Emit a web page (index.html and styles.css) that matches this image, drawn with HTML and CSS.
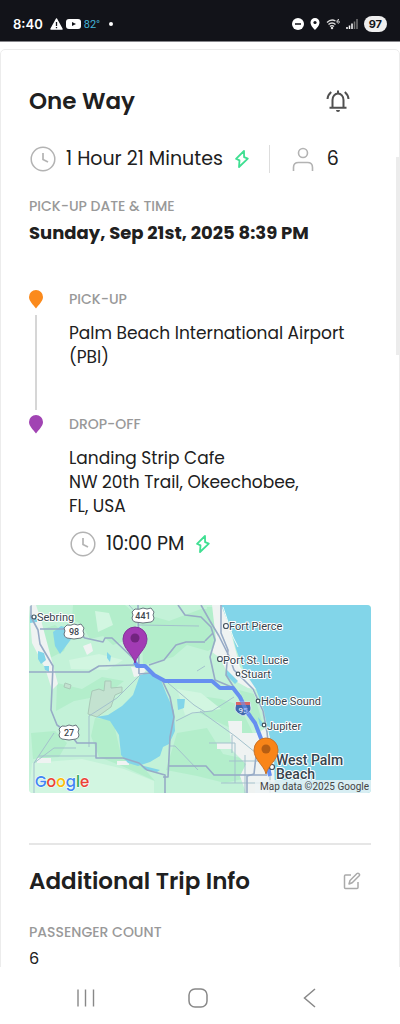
FILE: index.html
```html
<!DOCTYPE html>
<html lang="en">
<head>
  <meta charset="UTF-8">
  <meta name="viewport" content="width=device-width, initial-scale=1.0">
  <title>Trip Details</title>
  <link rel="stylesheet" href="styles.css">
</head>
<body>
  <header class="status-bar">
    <div class="status-left">
      <span class="clock">8:40</span>
      <svg width="13" height="12" viewBox="0 0 13 12"><path d="M6.500 1 12 11H1z" fill="#fff" stroke="#fff" stroke-width="1.500" stroke-linejoin="round"/><path d="M6.500 4v4M6.500 9v1.300" stroke="#121319" stroke-width="1.300"/></svg>
      <svg width="15" height="12" viewBox="0 0 15 12"><rect y="1" width="15" height="10" rx="3" fill="#fff"/><path d="M6 4l4 2-4 2z" fill="#121319"/></svg>
      <span class="temp">82°</span>
      <span class="dot"></span>
    </div>
    <div class="status-right">
      <svg width="12" height="12" viewBox="0 0 12 12"><circle cx="6" cy="6" r="6" fill="#fff"/><path d="M3 6h6" stroke="#121319" stroke-width="1.500"/></svg>
      <svg width="10" height="12" viewBox="0 0 10 12"><path d="M5 0a4.500 4.500 0 0 0-4.500 4.500C.5 8 5 12 5 12s4.500-4 4.500-7.500A4.500 4.500 0 0 0 5 0z" fill="#fff"/><circle cx="5" cy="4.500" r="1.600" fill="#121319"/></svg>
      <svg width="14" height="12" viewBox="0 0 14 12" fill="none" stroke="#ddd" stroke-width="1.300"><path d="M1 4.500c3-3 6-3 8.500-1.500M2.500 6.500c2-2 5-2 7 0M4 8.500c1-1 3-1 4 0"/><circle cx="6" cy="10" r=".6" fill="#ddd"/><path d="M13 1.500c-1.600 0-2 1-2 2.200 0 2 2.400 1.800 2.400.3 0-1.300-1.800-1.300-2.300-.2" stroke-width="1"/></svg>
      <svg width="12" height="12" viewBox="0 0 12 12" stroke-width="1.500"><path d="M1 11V9M3.500 11V7.500M6 11V5.500" stroke="#fff"/><path d="M8.500 11V3.500M11 11V1" stroke="#777"/></svg>
      <span class="battery">97</span>
    </div>
  </header>

  <main class="screen">
    <div class="card">
      <div class="card-head">
        <h1>One Way</h1>
        <button class="icon-btn bell" aria-label="Notifications">
          <svg width="24" height="24" viewBox="0 0 24 24" fill="none" stroke="#505050" stroke-width="2"><path d="M6.500 18.500V11a5.500 6.500 0 0 1 11 0v7.500M3.500 18.800h17M12 1.500v3"/><path d="M1.500 10c.2-3 1.400-5 3.700-7M22.500 10c-.2-3-1.400-5-3.700-7"/><path d="M10 21h4a2 2 0 0 1-4 0z" fill="#505050" stroke="none"/></svg>
        </button>
      </div>

      <div class="summary">
        <svg width="28" height="28" viewBox="0 0 28 28" fill="none" stroke="#b3b3b3" stroke-width="1.500"><circle cx="14" cy="14" r="11.800"/><path d="M14 8v6.500l5 2.500" stroke-width="1.700"/></svg>
        <span class="big">1 Hour 21 Minutes</span>
        <svg class="bolt" width="16" height="20" viewBox="0 0 16 20"><path d="M10 2 2 9.800l3.500 1.600L5 18l8.800-8.300-3.700-1.500z" fill="none" stroke="#3fdf92" stroke-width="1.800" stroke-linejoin="round"/></svg>
        <span class="passengers">
          <svg width="24" height="24" viewBox="0 0 24 24" fill="none" stroke="#b3b3b3" stroke-width="1.600"><circle cx="12" cy="6" r="4.500"/><path d="M2.500 24v-3.500c0-3 2-5 5-5h9c3 0 5 2 5 5V24"/></svg>
          <span class="big">6</span>
        </span>
      </div>

      <p class="label date-label">Pick-up date &amp; time</p>
      <p class="date">Sunday, Sep 21st, 2025 8:39 PM</p>

      <div class="stops">
        <div class="stop">
          <div class="marker">
            <svg width="14" height="20" viewBox="0 0 14 20"><path d="M7 1a7 7 0 0 0-7 7c0 4 4 7.500 7 11.500C10 15.500 14 12 14 8a7 7 0 0 0-7-7z" fill="#fb8a1c"/></svg>
            <span class="line"></span>
          </div>
          <div class="place">
            <p class="label">Pick-up</p>
            <p class="address">Palm Beach International Airport<br>(PBI)</p>
          </div>
        </div>
        <div class="stop">
          <div class="marker">
            <svg width="14" height="20" viewBox="0 0 14 20"><path d="M7 1a7 7 0 0 0-7 7c0 4 4 7.500 7 11.500C10 15.500 14 12 14 8a7 7 0 0 0-7-7z" fill="#a144b3"/></svg>
          </div>
          <div class="place">
            <p class="label">Drop-off</p>
            <p class="address">Landing Strip Cafe<br>NW 20th Trail, Okeechobee,<br>FL, USA</p>
            <div class="arrival">
              <svg width="28" height="28" viewBox="0 0 28 28" fill="none" stroke="#b3b3b3" stroke-width="1.500"><circle cx="14" cy="14" r="11.800"/><path d="M14 8v6.500l5 2.500" stroke-width="1.700"/></svg>
              <span class="big">10:00 PM</span>
              <svg class="bolt" width="16" height="20" viewBox="0 0 16 20"><path d="M10 2 2 9.800l3.500 1.600L5 18l8.800-8.300-3.700-1.500z" fill="none" stroke="#3fdf92" stroke-width="1.800" stroke-linejoin="round"/></svg>
            </div>
          </div>
        </div>
      </div>

      <svg class="map" viewBox="0 0 342 188" role="img" aria-label="Route map">
        <rect width="342" height="188" fill="#c3f2d8"/>
        <!-- darker vegetation -->
        <g fill="#b3eecb">
          <path d="M44 0h52l14 12-8 22-18 6-10-9-13 3-8-14-10-6z"/>
          <path d="M8 26l18-6 14 12-5 14-16 8-10-10z"/>
          <path d="M28 78l25 6 20-12 22 4-18 14-32 6-18 10z"/>
          <path d="M66 113l18 2 8 35 22 12 12 14-33-15-23-9-8-21z"/>
          <path d="M112 8l28 8 32-12h20l5 30-18 12-21-6-14 12-30 8z"/>
          <path d="M150 88l42 6 18 6 12 24 8 18-22-16-32-15-24-12z"/>
          <path d="M148 128l30-5 16 26 18 4 14 18-30 7-28-7-31-6z"/>
          <path d="M2 128l24-2 12 12-8 14-26 2z"/>
          <path d="M178 2h16l6 24-14 16-12-10z"/>
          <path d="M210 85l15 4 10 34-12-9z"/>
        </g>
        <!-- pale ground -->
        <g fill="#d2f6e1">
          <path d="M40 55l30-6 24 6-16 10-36-1z"/>
          <path d="M3 158l50-4 42 10 30 12v12H0z"/>
          <path d="M148 84l24 4 20 16-36 6z"/>
          <path d="M66 6l14 2 4 12-15 7z"/>
        </g>
        <!-- built-up areas -->
        <g fill="#eff3f2">
          <path d="M0 0h7l5 15 8 30 9 34-6 6-7-22L3 38z"/>
          <path d="M183 0h14l5 28 9 34 20 23-12-2-18-10-10-20-8-6 4-12z"/>
          <path d="M54 41l8-3 2 8-6 4zM8 153h14v5H8zM88 156h12v4H88z"/>
          <path d="M199 116h14v12h16l12-8 6 30v38h-30l-6-17 6-12-14-14z"/>
          <path d="M102 62l16 1-4 7-9 2zM188 138h20v6h-20z"/>
        </g>
        <path d="M70 84l5 2 1-10h6v7l11-1v5l-7 3-4 12-14 10-9-3 2-13 2-10z" fill="#c3e2d0" stroke="#aac9b8"/>
        <path d="M36 78l6 2-1 4-6-2z" fill="#c3e2d0" stroke="#aac9b8"/>
        <!-- water -->
        <g fill="#82d5e9">
          <path d="M192 0l9 22 6 22 8 22 12 18 8 22 4 19 6 30 1 33h96V0z"/>
          <path d="M111 70l8-2 13 7 5 13 8 18 1 20-6 13-6 3-3 9-10 6-12 4-10-3-7-8-2-20-9-14-14-4 12-2 14-9 11-11z"/>
          <path d="M24 27l8-6 8 2 3 10-12 16-5-8z"/>
          <path d="M9 46l6 2 2 7-5 4-3-5zM15 61h5v6l-4-2zM148 94h8l-1 9-6 2zM78 47l4 4-1 6-3-4zM1 10h7v7l-7 1z"/>
          <path d="M197 64l12 12-3 3-9-9zM229 112l8 10-6-1zM111 160l20 5-3 2-12-2z"/>
        </g>
        <path d="M194 2l10 30 5 10M208 59l13 20 13 28 6 24 5 34" fill="none" stroke="#eefbf5"/>
        <!-- thin roads -->
        <g fill="none" stroke="#a3c1cc" stroke-width="1">
          <path d="M60 142v-31l28-18 23-23M5 188v-30l20-30M5 158l20-15h22M10 151h57M139 78l26 22 11 7M147 116l16-8 20-2 22-14M110 20l60 1M171 106l35 25 26 21M141 141h5l23 24M168 66l8-5M203 130v18M180 138h26v40M200 156h48M192 178h55M216 150v38M241 150v38M100 0l9 10"/>
        </g>
        <!-- highways -->
        <g fill="none" stroke="#97abc6" stroke-width="1.600" stroke-linejoin="round">
          <path d="M2 0v12l7 13 2 14 13 22-2 44 6 15 14 10 6 8h19v15h27l16 5 8 7 18 5v18M0 67h60l10-6 35-1M11 24h32l13 9 18 4 2-4h7l24 23M109 0l1 69M120 60l15-5 12-15 10-3h19"/>
          <path d="M110 69l11-1 12 7 8 17 4 20-4 20-2 40h-5M139 161h38l8 9h53"/>
          <path d="M149 0l7 10 16 2 10 10 4 13-5 17 5 23 19 8M172 0l9 16 9 15 10 20 5 14 19 19 10 22 4 21 3 28M176 36l8-8M192 0v28l7 17-2 25 14 22M232 137l-5 14-2 18-7 2v17"/>
        </g>
        <path class="route" d="M106 57l2 4h8l9 9 11 6h47l8 7h13l7 9 7 15 8 11 7 18 8 35"/>

        <!-- road shields -->
        <g class="shields">
          <path d="M106 4q4 1 8-1 4 2 8 0l3 4q-2 3 0 6 0 3-3 4l-8 1-8-1q-3-1-3-4 2-3 0-6z"/><text x="114" y="14">441</text>
          <path d="M38 20q4 1 7-1 4 2 7 0l3 4q-2 3 0 6 0 3-3 4l-7 1-7-1q-3-1-3-4 2-3 0-6z"/><text x="45" y="30">98</text>
          <path d="M33 121q4 1 7-1 4 2 7 0l3 4q-2 3 0 6 0 3-3 4l-7 1-7-1q-3-1-3-4 2-3 0-6z"/><text x="40" y="131">27</text>
        </g>
        <path d="M207 97h14l1 6c0 4-4 6-8 8-4-2-8-4-8-8z" fill="#4169ad" stroke="#dce6f5"/>
        <path d="M207 97h14v3h-14z" fill="#d86767"/>
        <text x="214" y="108" class="interstate">95</text>
        <path class="route" d="M211 92l7 15 3 4" opacity=".6"/>

        <!-- towns -->
        <g fill="#fff" stroke="#43515b" stroke-width="1.200">
          <circle cx="5" cy="12" r="2"/><circle cx="197" cy="21" r="2.500"/><circle cx="191" cy="54" r="2.500"/><circle cx="209" cy="69" r="1.800"/><circle cx="229" cy="96" r="1.800"/><circle cx="235" cy="120" r="1.800"/><circle cx="243" cy="162" r="2.500"/>
        </g>
        <g class="towns">
          <text x="8" y="16">Sebring</text>
          <text x="200" y="25">Fort Pierce</text>
          <text x="194" y="59">Port St. Lucie</text>
          <text x="212" y="73">Stuart</text>
          <text x="232" y="100">Hobe Sound</text>
          <text x="238" y="125">Jupiter</text>
        </g>
        <g class="city"><text x="247" y="160">West Palm</text><text x="247" y="174">Beach</text></g>

        <!-- pins -->
        <path d="M106 58c-2-9-12-14-12-24a12 12 0 0 1 24 0c0 10-10 15-12 24z" fill="#a23bb4" stroke="#82349a"/>
        <circle cx="106" cy="33" r="4.500" fill="#722480"/>
        <path d="M237 169c-2-9-12-14-12-24a12 12 0 0 1 24 0c0 10-10 15-12 24z" fill="#f98518" stroke="#c87229"/>
        <circle cx="237" cy="144" r="4.500" fill="#b65e13"/>

        <text x="6" y="182" class="google"><tspan fill="#4285f4">G</tspan><tspan fill="#ea4335">o</tspan><tspan fill="#fbbc04">o</tspan><tspan fill="#4285f4">g</tspan><tspan fill="#34a853">l</tspan><tspan fill="#ea4335">e</tspan></text>
        <rect x="226" y="175" width="116" height="13" fill="#eef4f5" opacity=".8"/>
        <text x="340" y="185" class="credit">Map data ©2025 Google</text>
      </svg>

      <section class="extra">
        <div class="card-head">
          <h2>Additional Trip Info</h2>
          <button class="icon-btn edit" aria-label="Edit trip info">
            <svg width="18" height="18" viewBox="0 0 18 18" fill="none" stroke="#aaa" stroke-width="1.500" stroke-linejoin="round"><path d="M8 3H2.500Q1.500 3 1.500 4v11.500q0 1 1 1H14q1 0 1-1V10"/><path d="M6 12l1-3.500 7-7q1-.7 2 .2t.2 2l-7 7z"/></svg>
          </button>
        </div>
        <p class="label">Passenger count</p>
        <p class="count">6</p>
      </section>
    </div>
    <span class="scroll-thumb"></span>
  </main>

  <nav class="nav-bar">
    <button class="icon-btn" aria-label="Recent apps"><svg width="20" height="20" viewBox="0 0 20 20" stroke="#888" stroke-width="1.400"><path d="M2 1.500v17M9.500 1.500v17M17.500 1.500v17"/></svg></button>
    <button class="icon-btn" aria-label="Home"><svg width="20" height="20" viewBox="0 0 20 20" fill="none" stroke="#888" stroke-width="1.500"><rect x="1" y="1" width="18" height="18" rx="6"/></svg></button>
    <button class="icon-btn" aria-label="Back"><svg width="20" height="20" viewBox="0 0 20 20" fill="none" stroke="#888" stroke-width="1.500"><path d="M15 1 4.500 10 15 19"/></svg></button>
  </nav>
</body>
</html>
```
FILE: styles.css
```css
* {
  box-sizing: border-box;
}

body {
  display: flex;
  flex-direction: column;
  height: 100vh;
  margin: 0;
  background-color: #fff;
  color: #202020;
  font-family: Poppins, Inter, "Open Sans", sans-serif;
}

h1, h2, p {
  margin: 0;
}

svg {
  display: block;
  flex-shrink: 0;
}

.status-bar {
  display: flex;
  justify-content: space-between;
  align-items: flex-end;
  height: 42px;
  padding: 0 13px 9px;
  background-color: #121319;
  border-bottom: 1px solid #85858a;
  color: #fff;
}

.status-left, .status-right {
  display: flex;
  align-items: center;
  height: 16px;
}

.status-left {
  gap: 3px;
}

.status-right {
  gap: 6px;
}

.clock {
  margin-right: 4px;
  font-family: Inter, sans-serif;
  font-size: 13px;
  font-weight: 600;
}

.temp {
  color: #43b2d8;
  font-family: Roboto, sans-serif;
  font-size: 11px;
}

.dot {
  width: 4px;
  height: 4px;
  margin-left: 6px;
  border-radius: 50%;
  background-color: #fff;
}

.battery {
  padding: 0 5px;
  border-radius: 8px;
  background-color: #eee;
  color: #121319;
  font-family: Inter, sans-serif;
  font-size: 11px;
  line-height: 16px;
  font-weight: 700;
}

.screen {
  position: relative;
  flex: 1;
  min-height: 0;
  padding-top: 7px;
  overflow: hidden;
}

.card {
  padding: 32px 28px;
  border: 1px solid #ececec;
  border-radius: 5px;
}

.card-head {
  display: flex;
  justify-content: space-between;
  align-items: center;
}

h1, h2 {
  font-size: 23px;
  line-height: 38px;
  font-weight: 600;
}

.icon-btn {
  padding: 0;
  border: 0;
  background: none;
  cursor: pointer;
}

.bell {
  margin-right: 21px;
}

.edit {
  margin-right: 10px;
}

.summary, .arrival, .passengers {
  display: flex;
  align-items: center;
  height: 28px;
}

.summary {
  margin-top: 25px;
}

.big {
  margin-left: 9px;
  font-size: 19px;
  line-height: 28px;
}

.bolt {
  margin-left: 11px;
}

.passengers {
  margin-left: 19px;
  padding-left: 21px;
  border-left: 1px solid #ddd;
}

.passengers .big {
  margin-left: 12px;
}

.label {
  color: #999;
  font-size: 14px;
  line-height: 20px;
  font-weight: 500;
  text-transform: uppercase;
}

.date-label {
  margin-top: 23px;
}

.date {
  margin-top: 4px;
  font-size: 18px;
  line-height: 26px;
  font-weight: 700;
}

.stops {
  margin-top: 43px;
}

.stop {
  display: flex;
  gap: 26px;
}

.marker {
  display: flex;
  flex-direction: column;
  align-items: center;
}

.line {
  flex: 1;
  width: 2px;
  margin: 6px 0 4px;
  background-color: #d6d6d6;
}

.place {
  padding-bottom: 45px;
}

.stop:last-child .place {
  padding-bottom: 0;
}

.address {
  margin-top: 12px;
  font-size: 17px;
  line-height: 24px;
}

.arrival {
  margin-top: 12px;
}

.map {
  width: 100%;
  height: auto;
  margin-top: 47px;
  border-radius: 4px;
  font-family: Roboto, sans-serif;
}

.route {
  fill: none;
  stroke: #668ff0;
  stroke-width: 4;
  stroke-linejoin: round;
}

.shields path {
  fill: #fff;
  stroke: #6b7780;
}

.shields text {
  fill: #3c454c;
  font-size: 9px;
  font-weight: 500;
  text-anchor: middle;
}

.interstate {
  fill: #fff;
  font-size: 8px;
  text-anchor: middle;
}

.towns, .city {
  fill: #35444e;
  stroke: #fff;
  stroke-width: 2px;
  stroke-linejoin: round;
  paint-order: stroke;
}

.towns {
  font-size: 11px;
}

.city {
  font-size: 14px;
  font-weight: 500;
}

.google {
  font-family: Poppins, Inter, sans-serif;
  font-size: 15px;
  font-weight: 500;
  stroke: #fff;
  stroke-width: 1px;
  paint-order: stroke;
}

.credit {
  fill: #444;
  font-size: 10px;
  text-anchor: end;
}

.extra {
  margin-top: 50px;
  padding-top: 17px;
  border-top: 2px solid #e6e6e6;
}

.extra .label {
  margin-top: 22px;
}

.count {
  margin-top: 9px;
  font-size: 16px;
  line-height: 16px;
}

.scroll-thumb {
  position: absolute;
  top: 115px;
  right: 0;
  width: 4px;
  height: 198px;
  background-color: #ececec;
}

.nav-bar {
  display: flex;
  justify-content: space-between;
  align-items: center;
  height: 57px;
  padding: 4px 80px 0 76px;
  background-color: #fff;
}
```
